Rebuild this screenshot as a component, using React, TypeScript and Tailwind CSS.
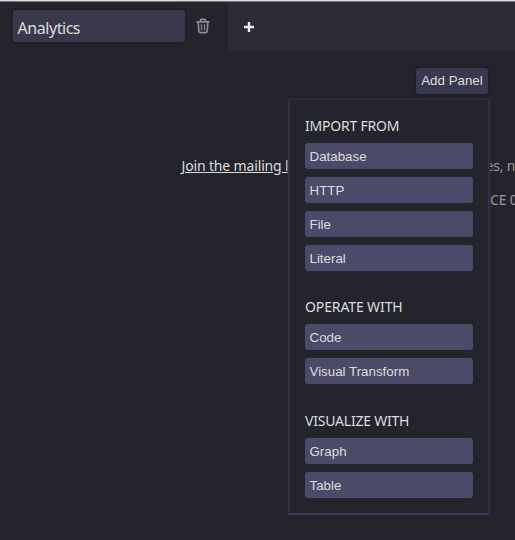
const groups = [
  { title: 'IMPORT FROM', spacing: 'tracking-[-0.22px]', items: ['Database', 'HTTP', 'File', 'Literal'] },
  { title: 'OPERATE WITH', spacing: 'tracking-[-0.12px]', items: ['Code', 'Visual Transform'] },
  { title: 'VISUALIZE WITH', spacing: 'tracking-[-0.22px]', items: ['Graph', 'Table'] },
];

function TrashIcon() {
  return (
    <svg width="14" height="16" viewBox="0 0 14 16" fill="none" stroke="#8b8b8b" strokeLinecap="round" strokeLinejoin="round">
      <path strokeWidth="1.7" d="M1 3.8H13M4.5 3.5V2.4Q4.5 1.3 5.5 1.3H8.5Q9.5 1.3 9.5 2.4V3.5M2.2 4L2.8 13Q2.9 14.6 4.4 14.6H9.6Q11.1 14.6 11.2 13L11.8 4" />
      <path strokeWidth="1.3" d="M5.5 6.7V11.8M8.5 6.7V11.8" />
    </svg>
  );
}

function AddPanelMenu() {
  return (
    <div className="absolute left-[288px] top-[98px] flex h-[416px] w-[202px] flex-col gap-[25.4px] border-2 border-t border-[#302f45] border-b-[#3c3b5c] bg-[#24242d] px-[15px] pt-[15px] shadow-[0_0_2px_#302f45]">
      {groups.map((group) => (
        <section key={group.title}>
          <h2 className={`h-[28px] text-[14px] leading-[21px] whitespace-nowrap text-[#dddddd] ${group.spacing}`}>{group.title}</h2>
          <div className="flex flex-col gap-[8px]">
            {group.items.map((item) => (
              <button key={item} className="block h-[26px] w-[168px] rounded-[3px] bg-[#4b4a69] pl-[4.5px] text-left font-['Liberation_Sans',Arial,sans-serif] text-[13.33px] leading-[27px] text-[#dddddd]">
                {item}
              </button>
            ))}
          </div>
        </section>
      ))}
    </div>
  );
}

export default function App() {
  return (
    <div className="relative h-[540px] w-[515px] overflow-hidden border-t border-[#d8dddd] bg-[#24242d] font-['Noto_Sans',sans-serif] text-[#dddddd]">
      <header className="flex h-[50px] border-t border-[#777b7d]">
        <div className="flex w-[228px] items-start pl-[13px] pt-[8px]">
          <div className="h-[32px] w-[172px] rounded-[3px] bg-[#39384d] pl-[4.5px] text-[16px] leading-[36px] tracking-[-0.45px] shadow-[0_0_3px_#17171d]">Analytics</div>
          <div className="ml-[11px] mt-[8px]"><TrashIcon /></div>
        </div>
        <div className="flex flex-1 items-start bg-[#2c2b38] pl-[16px] pt-[20px]">
          <svg width="10" height="10" viewBox="0 0 10 10" stroke="#eeeeee" strokeWidth="2.4"><path d="M0 5H10M5 0V10" /></svg>
        </div>
      </header>
      <main>
        <div className="flex justify-end pr-[27px] pt-[17px]">
          <button className="h-[26px] w-[72px] rounded-[3px] bg-[#39384f] font-['Liberation_Sans',Arial,sans-serif] text-[13.33px] whitespace-nowrap shadow-[0_0_3px_#17171d]">Add Panel</button>
        </div>
        <div className="pt-[60px] text-[14px] leading-[24px] whitespace-nowrap text-[#999999]">
          <div className="flex pl-[181.5px]">
            <a className="w-[304px] shrink-0 tracking-[-0.15px] text-[#dddddd] underline">Join the mailing l</a>
            <span className="tracking-[-0.2px]">es, no</span>
          </div>
          <div className="mt-[10px] pl-[490px] tracking-[-0.2px]">CE 0</div>
        </div>
      </main>
      <AddPanelMenu />
    </div>
  );
}
